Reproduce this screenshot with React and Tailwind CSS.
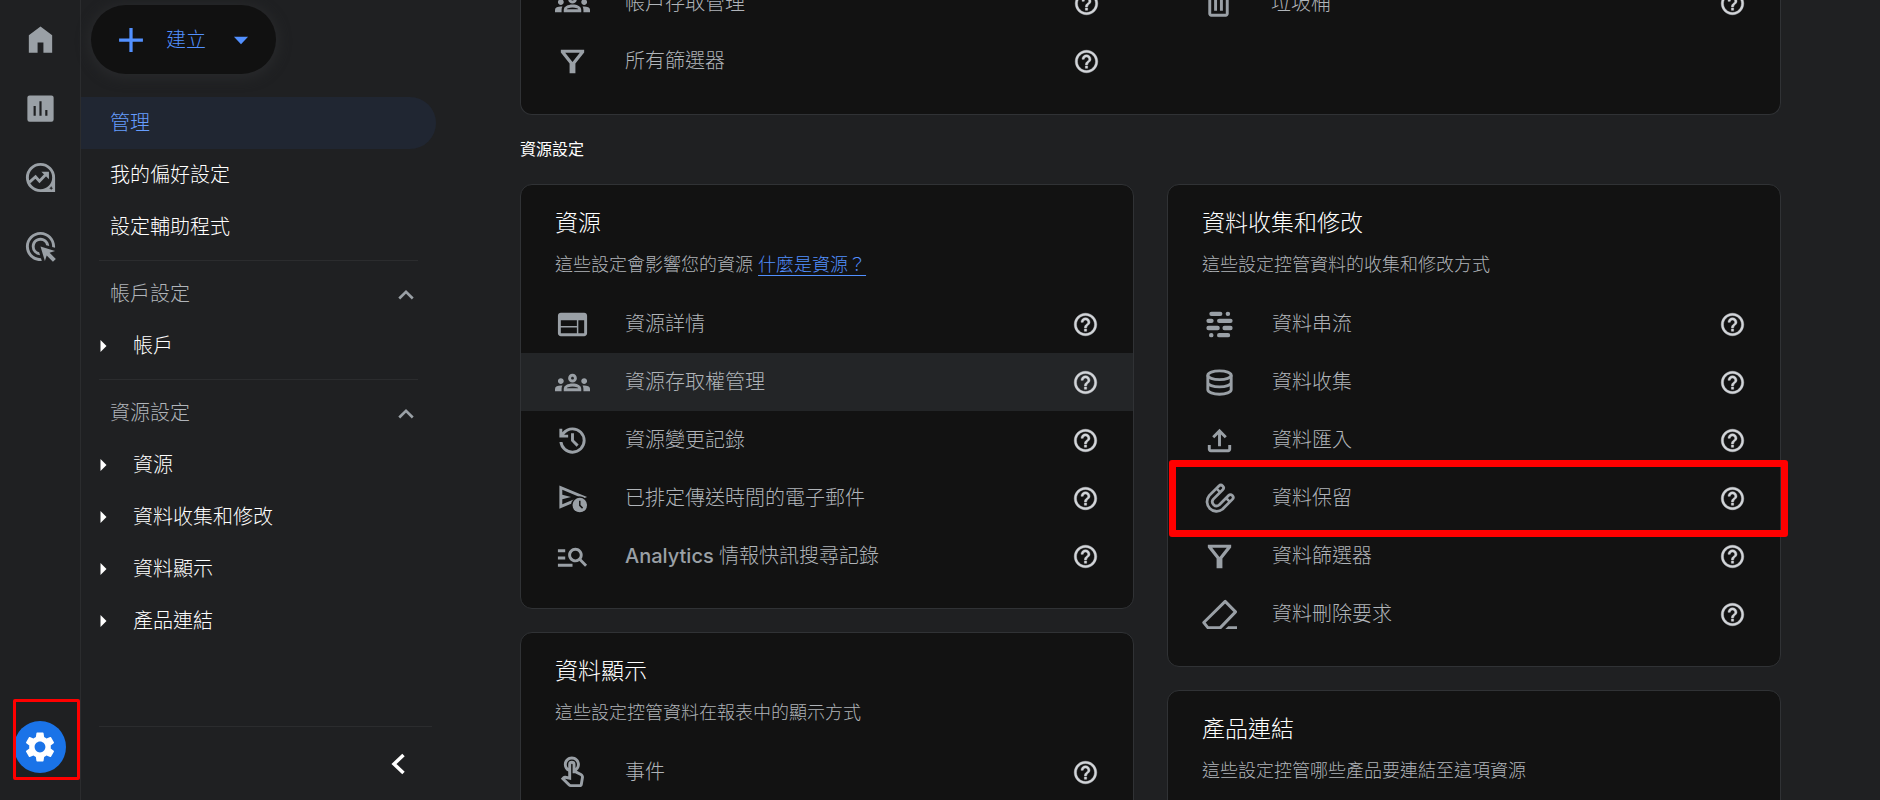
import { useState } from "react";
import { MdAdsClick, MdManageSearch, MdOutlineGroups, MdOutlineTouchApp, MdSettings, MdWeb } from "react-icons/md";

const CARD_BG = "#121212";

function Svg({ className = "w-[35px] h-[35px]", children, ...props }) {
  return (
    <svg viewBox="0 0 24 24" fill="currentColor" aria-hidden="true" className={className} {...props}>
      {children}
    </svg>
  );
}

const HomeIcon = () => (
  <Svg><path d="M4 21V9l8-6 8 6v12h-6v-7h-4v7z" /></Svg>
);

const ReportsIcon = () => (
  <Svg>
    <path
      fillRule="evenodd"
      d="M4.5 3h15A1.5 1.5 0 0 1 21 4.500v15a1.500 1.500 0 0 1-1.500 1.500h-15A1.500 1.500 0 0 1 3 19.500v-15A1.500 1.500 0 0 1 4.500 3zM7.250 10.300V17h1.500v-6.700zM11.250 7v10h1.500V7zM15.250 13v4h1.500v-4z"
    />
  </Svg>
);

const ExploreIcon = () => (
  <Svg>
    <path
      fillRule="evenodd"
      d="M12 2a10 10 0 0 1 10 10v10H12a10 10 0 0 1 0-20zm0 2a8 8 0 1 0 0 16 8 8 0 0 0 0-16zm7.300 13.900-.4 1-1 .4 1 .4.4 1 .4-1 1-.4-1-.4z"
    />
    <path d="M4.500 15.200 8.600 11.500l2.700 3 4.500-4.700" fill="none" stroke="currentColor" strokeWidth="2" />
    <path d="M12.600 8h5.200v5.200z" />
  </Svg>
);

const HistoryIcon = () => (
  <Svg>
    <path d="M12 21q-3.450 0-6.012-2.287T3.050 13H5.100q.35 2.600 2.313 4.300T12 19q2.925 0 4.963-2.037T19 12t-2.037-4.962T12 5q-1.725 0-3.225.8T6.250 8H9v2H3V4h2v2.350q1.275-1.600 3.113-2.475T12 3q1.875 0 3.513.713t2.850 1.924 1.925 2.850T21 12t-.712 3.513-1.925 2.850-2.850 1.925T12 21m2.800-4.800L11 12.400V7h2v4.600l3.200 3.200z" />
  </Svg>
);

const ScheduleSendIcon = () => (
  <Svg>
    <path fillRule="evenodd" d="M3 19V3l19 8zm2-3 11.850-5L5 6v3.500l6 1.500-6 1.500z" />
    <circle cx="17" cy="16.500" r="6" fill={CARD_BG} />
    <circle cx="17" cy="16.500" r="5" />
    <path d="M17 13.500v3.200l1.900 1.900" fill="none" stroke={CARD_BG} strokeWidth="1" />
  </Svg>
);

const FilterIcon = () => (
  <Svg>
    <path fillRule="evenodd" d="M4 4h16v1.800l-6 7.600V20h-4v-6.600L4 5.800zm3 2 5 6.300L17 6z" />
  </Svg>
);

const TrashIcon = () => (
  <Svg>
    <path
      fillRule="evenodd"
      d="M7 21q-.825 0-1.412-.587T5 19V6H4V4h5V3h6v1h5v2h-1v13q0 .825-.587 1.413T17 21zM17 6H7v13h10zM9 17h2V8H9zm4 0h2V8h-2z"
    />
  </Svg>
);

const StreamIcon = () => (
  <Svg fill="none" stroke="currentColor" strokeWidth="3" strokeLinecap="round">
    <path d="M6.500 4.700h6M17.700 4.700h.1M4.500 9.500h2M11.800 9.500h7.700M4.500 14.400h6.200M15.500 14.400h4M6.300 19.300h.1M11.800 19.300h6" />
  </Svg>
);

const DatabaseIcon = () => (
  <Svg fill="none" stroke="currentColor" strokeWidth="2">
    <ellipse cx="12" cy="7" rx="8" ry="3" />
    <path d="M4 7v10c0 1.660 3.580 3 8 3s8-1.340 8-3V7M4 12c0 1.660 3.580 3 8 3s8-1.340 8-3" />
  </Svg>
);

const UploadIcon = () => (
  <Svg>
    <path d="M11 16V7.850l-2.600 2.600L7 9l5-5 5 5-1.400 1.450-2.600-2.600V16zM6 20q-.825 0-1.412-.587T4 18v-3h2v3h12v-3h2v3q0 .825-.587 1.413T18 20z" />
  </Svg>
);

const MagnetIcon = () => (
  <Svg fill="none" strokeLinecap="round">
    <path d="M12.900 4.700 6.300 11.300a4.700 4.700 0 0 0 6.600 6.600l6.600-6.600" stroke="currentColor" strokeWidth="5.600" />
    <path d="M12.900 4.700 6.300 11.300a4.700 4.700 0 0 0 6.600 6.600l6.600-6.600" stroke={CARD_BG} strokeWidth="1.800" />
    <path d="m10.200 5.400 2 2M16.800 12l2 2" stroke="currentColor" strokeWidth="1.700" />
  </Svg>
);

const EraserIcon = () => (
  <Svg fill="none" stroke="currentColor" strokeWidth="2" strokeLinejoin="round">
    <path d="M15.900 3 23 10.200 12.600 21H4l-2.800-3.500z" />
    <path d="M18 20h6v2h-8z" fill="currentColor" stroke="none" />
  </Svg>
);

const HelpIcon = () => (
  <Svg className="w-[27px] h-[27px]" stroke="currentColor" strokeWidth="0.4">
    <path d="M11 18h2v-2h-2v2zm1-16C6.480 2 2 6.480 2 12s4.480 10 10 10 10-4.480 10-10S17.520 2 12 2zm0 18c-4.410 0-8-3.590-8-8s3.590-8 8-8 8 3.590 8 8-3.590 8-8 8zm0-14c-2.210 0-4 1.790-4 4h2c0-1.100.9-2 2-2s2 .9 2 2c0 2-3 1.750-3 5h2c0-2.250 3-2.500 3-5 0-2.210-1.790-4-4-4z" />
  </Svg>
);

const RAIL = [
  { label: "首頁", icon: HomeIcon },
  { label: "報表", icon: ReportsIcon },
  { label: "探索", icon: ExploreIcon },
  { label: "廣告", icon: MdAdsClick },
];

const LINKS = ["管理", "我的偏好設定", "設定輔助程式"];

const GROUPS = [
  { title: "帳戶設定", items: ["帳戶"] },
  { title: "資源設定", items: ["資源", "資料收集和修改", "資料顯示", "產品連結"] },
];

const COLUMNS = [
  [
    {
      title: "資源",
      description: "這些設定會影響您的資源",
      link: "什麼是資源？",
      rows: [
        { label: "資源詳情", icon: MdWeb },
        { label: "資源存取權管理", icon: MdOutlineGroups, active: true },
        { label: "資源變更記錄", icon: HistoryIcon },
        { label: "已排定傳送時間的電子郵件", icon: ScheduleSendIcon },
        { prefix: "Analytics", label: "情報快訊搜尋記錄", icon: MdManageSearch },
      ],
    },
    {
      title: "資料顯示",
      description: "這些設定控管資料在報表中的顯示方式",
      rows: [{ label: "事件", icon: MdOutlineTouchApp }],
    },
  ],
  [
    {
      title: "資料收集和修改",
      description: "這些設定控管資料的收集和修改方式",
      rows: [
        { label: "資料串流", icon: StreamIcon },
        { label: "資料收集", icon: DatabaseIcon },
        { label: "資料匯入", icon: UploadIcon },
        { label: "資料保留", icon: MagnetIcon, marked: true },
        { label: "資料篩選器", icon: FilterIcon },
        { label: "資料刪除要求", icon: EraserIcon },
      ],
    },
    {
      title: "產品連結",
      description: "這些設定控管哪些產品要連結至這項資源",
      rows: [],
    },
  ],
];

function Row({ row }) {
  const Icon = row.icon;
  return (
    <li className={`relative flex items-center h-[58px] pl-[34px] pr-[34px] ${row.active ? "bg-[#232527]" : ""}`}>
      <a href="#" className="flex flex-1 items-center gap-[35px] text-[20px] leading-7">
        <Icon className="w-[35px] h-[35px] shrink-0" />
        <span className="text-[#b0b4b9]">
          {row.prefix && <span className="font-medium text-[#9aa0a6]">{row.prefix} </span>}
          {row.label}
        </span>
      </a>
      <button type="button" aria-label="說明" className="text-[#d2d5d9]">
        <HelpIcon />
      </button>
      {row.marked && (
        <span className="absolute -top-[9px] -bottom-[10px] left-px -right-2 z-10 border-[7px] border-[#ff0000] rounded-[3px] pointer-events-none" />
      )}
    </li>
  );
}

function Card({ card }) {
  return (
    <section className="bg-[#121212] border border-[#303235] rounded-xl pt-[22px] pb-[23px]">
      <h3 className="px-[34px] text-[23px] leading-8 text-white">{card.title}</h3>
      <p className="px-[34px] mt-[14px] mb-[18px] text-[18px] leading-6 text-[#b0b4b9]">
        {card.description}
        {card.link && (
          <>
            {" "}
            <a href="#" className="text-[#5290ff] underline underline-offset-4">{card.link}</a>
          </>
        )}
      </p>
      <ul>
        {card.rows.map((row) => (
          <Row key={row.label} row={row} />
        ))}
      </ul>
    </section>
  );
}

function Rail() {
  return (
    <nav className="flex flex-col items-center w-[81px] shrink-0 border-r border-[#2b2c2e] pt-[5px] pb-[27px]">
      {RAIL.map(({ label, icon: Icon }) => (
        <button key={label} type="button" aria-label={label} className="flex items-center justify-center w-full h-[69px]">
          <Icon className="w-[35px] h-[35px]" />
        </button>
      ))}
      <div className="relative mt-auto">
        <button
          type="button"
          aria-label="管理"
          className="flex items-center justify-center w-[52px] h-[52px] rounded-full bg-[#1a73e8] text-white"
        >
          <MdSettings size={36} />
        </button>
        <span className="absolute -left-px -right-[14px] -top-[22px] -bottom-[7px] border-3 border-[#ff0000] rounded-[2px] pointer-events-none" />
      </div>
    </nav>
  );
}

function Sidebar({ open, onToggle }) {
  return (
    <aside className="flex flex-col w-[355px] shrink-0 pt-[5px] text-[20px] leading-7">
      <button
        type="button"
        className="flex items-center ml-[10px] w-[185px] h-[69px] pl-[27px] gap-[22px] rounded-full bg-[#111111] text-[#5290ff] shadow-[0_2px_12px_3px_#28292b] shrink-0"
      >
        <Svg className="w-[26px] h-[26px]"><path d="M10.500 1h3v9.500H23v3h-9.500V23h-3v-9.500H1v-3h9.500z" /></Svg>
        建立
        <Svg className="w-[26px] h-[26px]"><path d="M5.500 9h13L12 16z" /></Svg>
      </button>

      <ul className="mt-[23px]">
        {LINKS.map((label, i) => (
          <li key={label}>
            <a
              href="#"
              className={`flex items-center h-[52px] pl-[29px] rounded-r-full ${i === 0 ? "bg-[#202632] text-[#669dff]" : "text-white"}`}
            >
              {label}
            </a>
          </li>
        ))}
      </ul>

      {GROUPS.map((group) => (
        <div key={group.title}>
          <hr className="ml-[18px] mr-[18px] my-[7px] border-[#2b2c2e]" />
          <button
            type="button"
            onClick={() => onToggle(group.title)}
            className="flex items-center justify-between w-full h-[52px] pl-[29px] pr-[21px]"
          >
            <span className="text-[#b0b4b9]">{group.title}</span>
            <Svg className="w-[18px] h-[18px]" fill="none" stroke="currentColor" strokeWidth="3.500">
              <path d="m3 18 9-9 9 9" />
            </Svg>
          </button>
          {open[group.title] && (
            <ul className="text-white">
              {group.items.map((item) => (
                <li key={item}>
                  <a href="#" className="flex items-center h-[52px] pl-[19px] gap-[26px]">
                    <svg viewBox="0 0 7 12" fill="currentColor" aria-hidden="true" className="w-[7px] h-3">
                      <path d="M0.500 0 6.500 6l-6 6z" />
                    </svg>
                    {item}
                  </a>
                </li>
              ))}
            </ul>
          )}
        </div>
      ))}

      <div className="flex items-center justify-end h-[74px] mt-auto ml-[18px] mr-1 pr-[27px] border-t border-[#2b2c2e]">
        <button type="button" aria-label="收合" className="text-white">
          <Svg className="w-[14px] h-[22px]" viewBox="0 0 14 22" fill="none" stroke="currentColor" strokeWidth="3.500">
            <path d="M12.500 2 3 11l9.500 9" />
          </Svg>
        </button>
      </div>
    </aside>
  );
}

export default function App() {
  const [open, setOpen] = useState({ 帳戶設定: true, 資源設定: true });
  const toggle = (title) => setOpen({ ...open, [title]: !open[title] });

  return (
    <div className="flex h-screen overflow-hidden bg-[#1f2022] text-[#9aa0a6] font-light font-['Inter','Noto_Sans_CJK_TC',sans-serif]">
      <Rail />
      <Sidebar open={open} onToggle={toggle} />

      <main className="flex-1 overflow-hidden pl-[84px] pr-[99px]">
        {/* Account card, scrolled past the top edge */}
        <section className="grid grid-cols-2 gap-x-[33px] -mt-[26px] pb-[24px] bg-[#121212] border border-t-0 border-[#303235] rounded-b-xl">
          <ul>
            <Row row={{ label: "帳戶存取管理", icon: MdOutlineGroups }} />
            <Row row={{ label: "所有篩選器", icon: FilterIcon }} />
          </ul>
          <ul>
            <Row row={{ label: "垃圾桶", icon: TrashIcon }} />
          </ul>
        </section>

        <h2 className="mt-[22px] mb-[23px] text-[16px] leading-6 text-white font-normal">資源設定</h2>

        <div className="grid grid-cols-2 gap-x-[33px] items-start">
          {COLUMNS.map((cards, i) => (
            <div key={i} className="flex flex-col gap-[23px]">
              {cards.map((card) => (
                <Card key={card.title} card={card} />
              ))}
            </div>
          ))}
        </div>
      </main>
    </div>
  );
}
